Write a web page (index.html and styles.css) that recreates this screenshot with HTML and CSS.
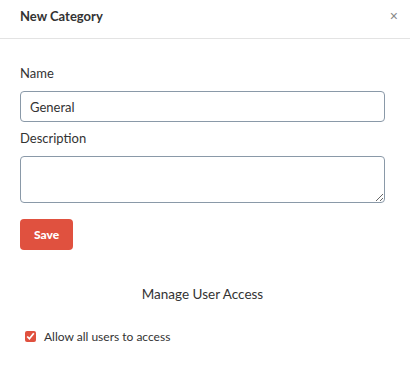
FILE: index.html
```html
<!DOCTYPE html>
<html lang="en">
<head>
    <meta charset="UTF-8">
    <title>New Category</title>
    <link rel="stylesheet" href="styles.css">
</head>
<body>
    <div class="modal">
        <div class="modal-header">
            <h2>New Category</h2>
            <button class="close-btn">&times;</button>
        </div>

        <div class="modal-body">
            <form class="category-form">
                <label class="field-label" for="name">Name</label>
                <input type="text" id="name" class="text-input" value="General">

                <label class="field-label" for="description">Description</label>
                <textarea id="description" class="text-area"></textarea>

                <div class="actions">
                    <button type="button" class="save-btn">Save</button>
                </div>
            </form>

            <h3 class="access-title">Manage User Access</h3>

            <label class="check-row">
                <input type="checkbox" class="check" checked>
                <span>Allow all users to access</span>
            </label>
        </div>
    </div>
</body>
</html>
```

FILE: styles.css
```css
body {
    margin: 0;
    background-color: white;
    font-family: Lato, "Liberation Sans", sans-serif;
    color: #333;
}
.modal {
    width: 410px;
}
.modal-header {
    display: flex;
    align-items: center;
    justify-content: space-between;
    height: 39px;
    padding: 0 12px 7px 20px;
    border-bottom: 1px solid #e3e3e3;
    box-sizing: border-box;
}
.modal-header h2 {
    margin: 0;
    font-size: 13px;
    font-weight: bold;
    color: #333;
}
.close-btn {
    background: none;
    border: none;
    padding: 0;
    font-size: 14px;
    color: #888;
    cursor: pointer;
}
.modal-body {
    padding: 26px 25px 0 20px;
}
.category-form {
    display: flex;
    flex-direction: column;
}
.field-label {
    font-size: 13px;
    color: #333;
    margin-bottom: 10px;
}
.text-input,
.text-area {
    font-family: inherit;
    font-size: 13px;
    color: #333;
    border: 1px solid #8a99a8;
    border-radius: 4px;
    box-sizing: border-box;
    width: 100%;
}
.text-input {
    height: 31px;
    padding: 0 9px;
    margin-bottom: 8px;
}
.text-area {
    height: 47px;
    resize: vertical;
}
.actions {
    margin-top: 16px;
}
.save-btn {
    background-color: #e0513f;
    color: white;
    border: none;
    border-radius: 4px;
    width: 53px;
    height: 31px;
    font-family: inherit;
    font-size: 12px;
    font-weight: 900;
    cursor: pointer;
}
.access-title {
    margin: 36px 0 0;
    font-size: 13.5px;
    font-weight: normal;
    text-align: center;
    color: #333;
}
.check-row {
    display: flex;
    align-items: center;
    gap: 8px;
    margin: 27px 0 0 5px;
    font-size: 12px;
    color: #333;
}
.check {
    margin: 0;
    width: 11px;
    height: 11px;
    accent-color: #e0513f;
}
```
